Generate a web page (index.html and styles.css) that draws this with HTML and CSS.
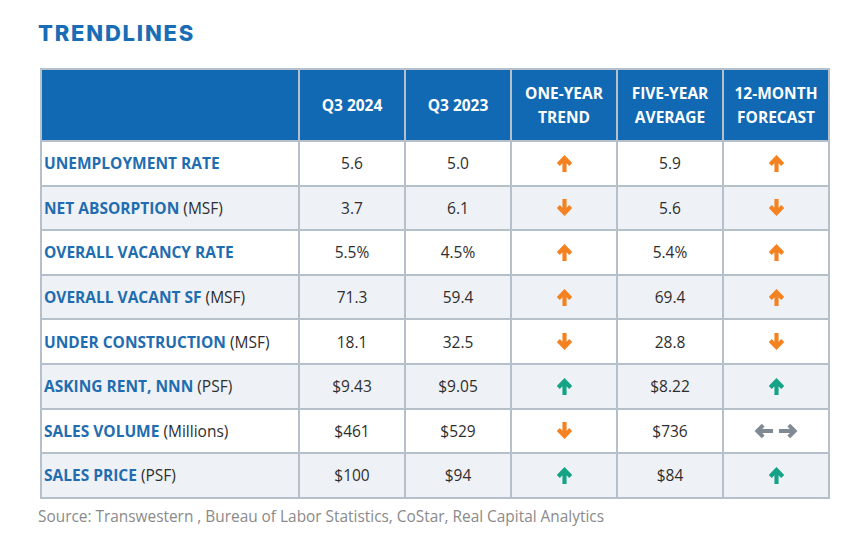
FILE: index.html
```html
<!DOCTYPE html>
<html>
<head>
<meta charset="utf-8">
<link rel="stylesheet" href="styles.css">
</head>
<body>
<svg width="0" height="0" class="defs">
  <defs>
    <symbol id="up" viewBox="0 0 14 16">
      <path d="M7 16V3.8M1.2 8.9L7 2.8l5.8 6.1" fill="none" stroke="currentColor" stroke-width="3.9"/>
    </symbol>
    <symbol id="down" viewBox="0 0 14 16">
      <path d="M7 0v12.2M1.2 7.1L7 13.2l5.8-6.1" fill="none" stroke="currentColor" stroke-width="3.9"/>
    </symbol>
    <symbol id="lr" viewBox="0 0 46 16">
      <path d="M20 8H4.5M10.2 2.2L4.4 8l5.8 5.8M26 8h15.5M35.8 2.2L41.6 8l-5.8 5.8" fill="none" stroke="currentColor" stroke-width="4"/>
    </symbol>
  </defs>
</svg>
<div class="page">
  <h1 class="title">TRENDLINES</h1>
  <table class="trend">
    <thead>
      <tr>
        <th class="c-label"></th>
        <th>Q3 2024</th>
        <th>Q3 2023</th>
        <th>ONE-YEAR<br>TREND</th>
        <th>FIVE-YEAR<br>AVERAGE</th>
        <th>12-MONTH<br>FORECAST</th>
      </tr>
    </thead>
    <tbody>
      <tr>
        <td class="c-label"><b>UNEMPLOYMENT RATE</b></td>
        <td>5.6</td><td>5.0</td>
        <td><svg class="ic orange"><use href="#up"/></svg></td>
        <td>5.9</td>
        <td><svg class="ic orange"><use href="#up"/></svg></td>
      </tr>
      <tr>
        <td class="c-label"><b>NET ABSORPTION</b> (MSF)</td>
        <td>3.7</td><td>6.1</td>
        <td><svg class="ic orange"><use href="#down"/></svg></td>
        <td>5.6</td>
        <td><svg class="ic orange"><use href="#down"/></svg></td>
      </tr>
      <tr>
        <td class="c-label"><b>OVERALL VACANCY RATE</b></td>
        <td>5.5%</td><td>4.5%</td>
        <td><svg class="ic orange"><use href="#up"/></svg></td>
        <td>5.4%</td>
        <td><svg class="ic orange"><use href="#up"/></svg></td>
      </tr>
      <tr>
        <td class="c-label"><b>OVERALL VACANT SF</b> (MSF)</td>
        <td>71.3</td><td>59.4</td>
        <td><svg class="ic orange"><use href="#up"/></svg></td>
        <td>69.4</td>
        <td><svg class="ic orange"><use href="#up"/></svg></td>
      </tr>
      <tr>
        <td class="c-label"><b>UNDER CONSTRUCTION</b> (MSF)</td>
        <td>18.1</td><td>32.5</td>
        <td><svg class="ic orange"><use href="#down"/></svg></td>
        <td>28.8</td>
        <td><svg class="ic orange"><use href="#down"/></svg></td>
      </tr>
      <tr>
        <td class="c-label"><b>ASKING RENT, NNN</b> (PSF)</td>
        <td>$9.43</td><td>$9.05</td>
        <td><svg class="ic teal"><use href="#up"/></svg></td>
        <td>$8.22</td>
        <td><svg class="ic teal"><use href="#up"/></svg></td>
      </tr>
      <tr>
        <td class="c-label"><b>SALES VOLUME</b> (Millions)</td>
        <td>$461</td><td>$529</td>
        <td><svg class="ic orange"><use href="#down"/></svg></td>
        <td>$736</td>
        <td><svg class="ic-wide gray"><use href="#lr"/></svg></td>
      </tr>
      <tr>
        <td class="c-label"><b>SALES PRICE</b> (PSF)</td>
        <td>$100</td><td>$94</td>
        <td><svg class="ic teal"><use href="#up"/></svg></td>
        <td>$84</td>
        <td><svg class="ic teal"><use href="#up"/></svg></td>
      </tr>
    </tbody>
  </table>
  <p class="source">Source: Transwestern , Bureau of Labor Statistics, CoStar, Real Capital Analytics</p>
</div>
</body>
</html>
```

FILE: styles.css
```css
html, body {
  margin: 0;
  padding: 0;
  background: #ffffff;
}
.defs {
  position: absolute;
  width: 0;
  height: 0;
}
.page {
  padding: 19px 0 0 38px;
  font-family: "Open Sans", "Liberation Sans", sans-serif;
}
.title {
  margin: 0 0 21px 0;
  font-family: "Inter", "Open Sans", sans-serif;
  font-weight: 800;
  font-size: 22px;
  line-height: 28px;
  letter-spacing: 1.8px;
  color: #1a6db4;
}
.trend {
  margin-left: 2px;
  border-collapse: collapse;
  table-layout: fixed;
  border: 2px solid #b5c0cb;
}
.trend th, .trend td {
  border: 2px solid #b5c0cb;
  padding: 0;
  text-align: center;
  vertical-align: middle;
}
.trend th {
  background: #1169b4;
  color: #ffffff;
  font-weight: 700;
  font-size: 15.5px;
  line-height: 24px;
  height: 70px;
  width: 104px;
}
.trend th.c-label {
  width: 256px;
}
.trend td {
  height: 42.6px;
  font-size: 15.5px;
  color: #2e2e2e;
}
.trend tbody tr:nth-child(even) td {
  background: #eef1f5;
}
.trend td.c-label {
  text-align: left;
  padding-left: 2px;
  color: #2e2e2e;
}
.trend td.c-label b {
  color: #1f6db0;
  font-weight: 700;
}
.ic {
  display: block;
  margin: 0 auto;
  width: 15px;
  height: 17px;
}
.ic-wide {
  display: block;
  margin: 0 auto;
  width: 46px;
  height: 16px;
}
.orange { color: #f58220; }
.teal { color: #14a386; }
.gray { color: #7f8a93; }
.source {
  margin: 7px 0 0 0;
  font-size: 15.4px;
  color: #8a8a8a;
}
```
